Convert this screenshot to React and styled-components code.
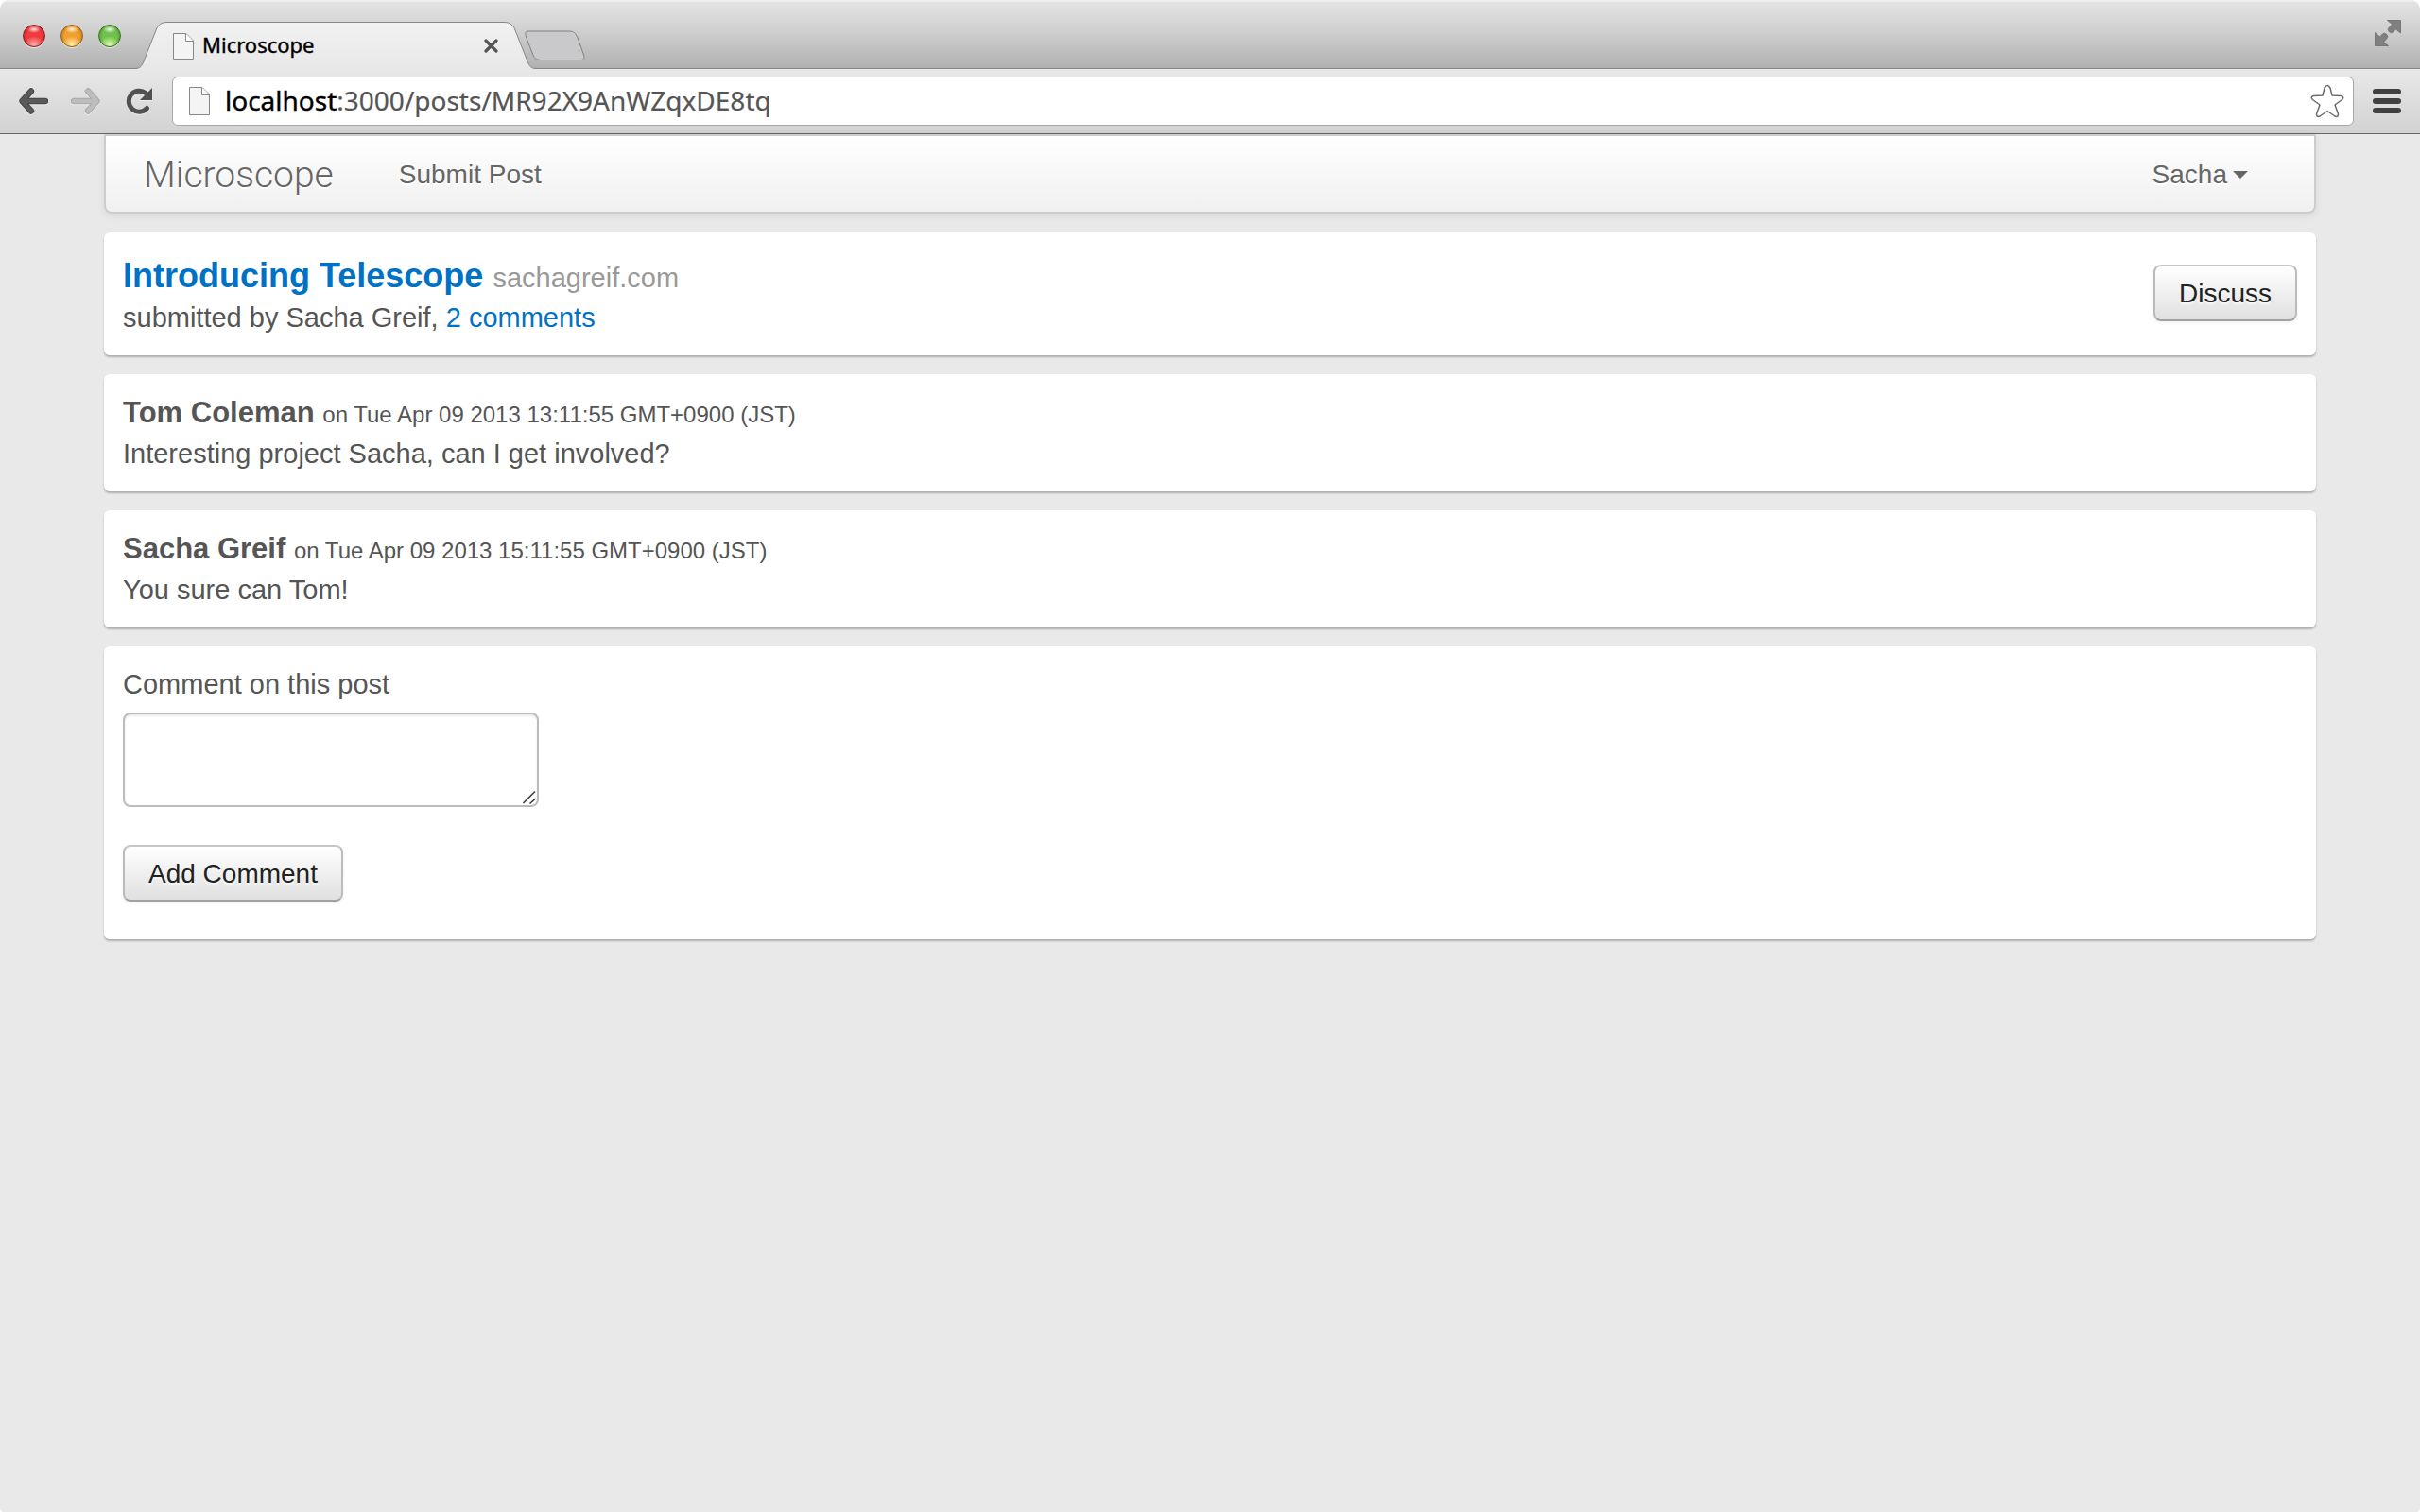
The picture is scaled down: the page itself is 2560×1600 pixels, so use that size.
import React from 'react';
import styled, { createGlobalStyle } from 'styled-components';

const sans = '"Liberation Sans", Arial, sans-serif';
const chromeFont = '"Noto Sans", "Open Sans", sans-serif';

const GlobalStyle = createGlobalStyle`
  * { box-sizing: border-box; }
  body { margin: 0; background: #fff; font-family: ${sans}; font-size: 28px; line-height: 40px; color: #555; }
  button, textarea, input { font: inherit; color: inherit; margin: 0; }
  a { color: #0072c6; text-decoration: none; }
  svg { display: block; flex: none; }
`;

const Window = styled.div`
  min-height: 100vh;
  display: flex;
  flex-direction: column;
  background: #e9e9e9;
  border-radius: 10px 10px 4px 4px;
  overflow: hidden;
`;

const TitleBar = styled.header`
  height: 73px;
  display: flex;
  align-items: flex-end;
  padding: 0 20px 0 24px;
  background: linear-gradient(#e4e4e4, #d2d2d2 40%, #b0b0b0);
  box-shadow: inset 0 2px 0 #efefef, inset 0 -1px 0 #868686;
`;

const Lights = styled.div`
  display: flex;
  gap: 16px;
  margin-bottom: 23px;
`;

const Light = styled.button`
  width: 24px;
  height: 24px;
  padding: 0;
  border: 1px solid ${(p) => p.$rim};
  border-radius: 50%;
  background:
    radial-gradient(ellipse 7px 4px at 50% 4px, rgba(255, 255, 255, 0.85), rgba(255, 255, 255, 0) 100%),
    radial-gradient(ellipse 11px 9px at 50% 92%, ${(p) => p.$glow}, transparent 100%),
    radial-gradient(circle at 50% 50%, ${(p) => p.$fill} 50%, ${(p) => p.$rim} 100%);
  box-shadow: 0 1px 1px rgba(255, 255, 255, 0.6);
`;

const Tab = styled.div`
  display: flex;
  height: 50px;
  margin-left: 15px;
`;

const TabBody = styled.div`
  width: 356px;
  display: flex;
  align-items: center;
  padding: 0 6px;
  background: linear-gradient(#f1f1f1, #e8e8e8);
  border-top: 1px solid #868686;
`;

const TabTitle = styled.span`
  flex: 1;
  margin-left: 9px;
  padding-bottom: 4px;
  font: 22px/28px ${chromeFont};
  color: #000;
  -webkit-text-stroke: 0.4px #000;
`;

const IconButton = styled.button`
  display: flex;
  align-items: center;
  justify-content: center;
  padding: 0;
  border: 0;
  background: none;
`;

const NewTab = styled(IconButton)`
  margin: 0 auto 8px -12px;
`;

const FullScreen = styled(IconButton)`
  margin-bottom: 24px;
`;

const Toolbar = styled.nav`
  height: 69px;
  display: flex;
  align-items: center;
  padding: 0 20px;
  background: linear-gradient(#e8e8e8, #d2d2d2);
  border-bottom: 1px solid #666;
`;

const NavButtons = styled.div`
  display: flex;
  gap: 24px;
  margin-right: 20px;
  svg { filter: drop-shadow(0 1px 0 rgba(255, 255, 255, 0.5)); }
`;

const Omnibox = styled.div`
  flex: 1;
  height: 52px;
  display: flex;
  align-items: center;
  padding: 0 9px 0 17px;
  background: #fff;
  border: 1px solid #a8a8a8;
  border-radius: 6px;
  margin-right: 20px;
`;

const Url = styled.div`
  flex: 1;
  margin-left: 16px;
  padding-bottom: 2px;
  font: 28px/40px ${chromeFont};
  color: #555;
  -webkit-text-stroke: 0.2px #555;
  strong { font-weight: 400; color: #000; -webkit-text-stroke: 0.4px #000; }
`;

const Page = styled.main`
  padding: 0 110px;
  display: flex;
  flex-direction: column;
  gap: 20px;
`;

const NavBar = styled.nav`
  height: 84px;
  display: flex;
  align-items: center;
  padding: 2px 70px 0 40px;
  background: linear-gradient(#fff, #f0f0f0);
  border: 2px solid #ccc;
  border-radius: 0 0 8px 8px;
  box-shadow: 0 2px 8px rgba(0, 0, 0, 0.08);
  text-shadow: 0 2px 0 #fff;
`;

const Brand = styled.a`
  font: 300 39px/40px Roboto, ${sans};
  color: #666;
`;

const NavLink = styled.a`
  margin-left: 69px;
  color: #666;
`;

const UserMenu = styled.button`
  display: flex;
  align-items: center;
  gap: 6px;
  margin-left: auto;
  padding: 0;
  border: 0;
  background: none;
  color: #666;
  text-shadow: inherit;
`;

const Caret = styled.span`
  border: 8px solid transparent;
  border-top-color: #666;
  border-bottom: 0;
`;

const Card = styled.section`
  padding: 20px 20px 18px;
  background: #fff;
  border-radius: 6px;
  box-shadow: 0 2px 2px rgba(0, 0, 0, 0.25);
`;

const PostCard = styled(Card)`
  display: flex;
  justify-content: space-between;
  padding-top: 26px;
`;

const PostTitle = styled.h1`
  margin: 0 0 2px;
  font-size: 36px;
  line-height: 40px;
  span { font-size: 29px; line-height: 1; font-weight: 400; color: #999; }
`;

const Text = styled.p`
  margin: 0;
  font-size: 29px;
  line-height: 44px;
`;

const CommentHead = styled.h2`
  margin: 0;
  font-size: 31px;
  line-height: 42px;
  span { font-size: 24px; line-height: 1; font-weight: 400; }
`;

const Button = styled.button`
  height: 60px;
  padding: 2px 25px 0;
  border: 2px solid #bbb;
  border-color: #c6c6c6 #bbb #a2a2a2;
  border-radius: 8px;
  background: linear-gradient(#fff, #e0e0e0);
  color: #222;
  text-shadow: 0 2px 2px rgba(255, 255, 255, 0.75);
  box-shadow: 0 2px 4px rgba(0, 0, 0, 0.05);
`;

const Discuss = styled(Button)`
  margin-top: 8px;
`;

const Form = styled.form`
  display: flex;
  flex-direction: column;
  align-items: flex-start;
  padding-bottom: 22px;
`;

const Label = styled.label`
  font-size: 29px;
`;

const Field = styled.textarea`
  display: block;
  width: 440px;
  height: 100px;
  margin: 10px 0 40px;
  padding: 8px 12px;
  border: 2px solid #bbb;
  border-radius: 8px;
  box-shadow: inset 0 2px 2px rgba(0, 0, 0, 0.08);
  resize: none;
`;

const FieldWrap = styled.div`
  position: relative;
  svg { position: absolute; right: 3px; bottom: 43px; }
`;

function PageIcon({ h }) {
  return (
    <svg width="22" height={h} viewBox={`0 0 22 ${h}`}>
      <path d={`M.5 .5H14L21.5 8V${h - 0.5}H.5Z`} fill="#f4f4f4" stroke="#888" />
      <path d="M13.5 .5V8.5H21.5" fill="#fff" stroke="#888" />
    </svg>
  );
}

function Arrow({ edge, fill, back }) {
  const d = back ? 'M13 3.500L3.500 14L13 24.500M4 14H28' : 'M18 3.500L27.500 14L18 24.500M27 14H3';
  return (
    <svg width="31" height="28" viewBox="0 0 31 28" fill="none" strokeLinecap="round" strokeLinejoin="round">
      <path d={d} stroke={edge} strokeWidth="6.400" />
      <path d={d} stroke={fill} strokeWidth="4.400" />
    </svg>
  );
}

const comments = [
  { who: 'Tom Coleman', when: 'on Tue Apr 09 2013 13:11:55 GMT+0900 (JST)', text: 'Interesting project Sacha, can I get involved?' },
  { who: 'Sacha Greif', when: 'on Tue Apr 09 2013 15:11:55 GMT+0900 (JST)', text: 'You sure can Tom!' },
];

export default function App() {
  return (
    <Window>
      <GlobalStyle />
      <TitleBar>
        <Lights>
          <Light aria-label="Close" $fill="#ee3a3e" $rim="#8f1d20" $glow="#ffb0a8" />
          <Light aria-label="Minimize" $fill="#f0a030" $rim="#95601a" $glow="#fff0a0" />
          <Light aria-label="Zoom" $fill="#6fc04c" $rim="#3a7424" $glow="#dcffb0" />
        </Lights>
        <Tab>
          <svg width="34" height="50" viewBox="0 0 34 50">
            <defs>
              <linearGradient id="tabFill" x1="0" y1="0" x2="0" y2="1">
                <stop offset="0" stopColor="#f1f1f1" />
                <stop offset="1" stopColor="#e8e8e8" />
              </linearGradient>
            </defs>
            <path d="M0 49.500C5 49.500 7 47 9 42L22 9C24 3 28 .5 34 .5V50H0Z" fill="url(#tabFill)" />
            <path d="M0 49.500C5 49.500 7 47 9 42L22 9C24 3 28 .5 34 .5" fill="none" stroke="#868686" />
          </svg>
          <TabBody>
            <PageIcon h={28} />
            <TabTitle>Microscope</TabTitle>
            <IconButton aria-label="Close tab">
              <svg width="15" height="15" viewBox="0 0 15 15">
                <path d="M2 2L13 13M13 2L2 13" stroke="#555" strokeWidth="3.200" strokeLinecap="round" />
              </svg>
            </IconButton>
          </TabBody>
          <svg width="34" height="50" viewBox="0 0 34 50">
            <path d="M34 49.500C29 49.500 27 47 25 42L12 9C10 3 6 .5 0 .5V50H34Z" fill="url(#tabFill)" />
            <path d="M34 49.500C29 49.500 27 47 25 42L12 9C10 3 6 .5 0 .5" fill="none" stroke="#868686" />
          </svg>
        </Tab>
        <NewTab aria-label="New tab">
          <svg width="64" height="33" viewBox="0 0 64 33">
            <path d="M4 1H47C52 1 54 3 56 8L62.500 26C64 30 62 31.500 59 31.500H17C12 31.500 10 29 8 24L1.500 7C0 3 1 1 4 1Z" fill="#c9c9cb" stroke="#808080" />
          </svg>
        </NewTab>
        <FullScreen aria-label="Full screen">
          <svg width="28" height="28" viewBox="0 0 28 28" fill="#808080" stroke="#6c6c6c" strokeWidth=".8">
            <path d="M13.500 .5H27.500V14L22.500 10L19.500 13C17 15.500 12.500 11 15 8.500L18.500 4.500Z" />
            <path d="M.5 13.500L5.500 18L8.500 15C11 12.500 15.500 17 13 19.500L9.500 23.500L14.500 27.500H.5Z" />
          </svg>
        </FullScreen>
      </TitleBar>

      <Toolbar>
        <NavButtons>
          <IconButton aria-label="Back"><Arrow back edge="#464646" fill="#5a5a5a" /></IconButton>
          <IconButton aria-label="Forward"><Arrow edge="#a9a9a9" fill="#bdbdbd" /></IconButton>
          <IconButton aria-label="Reload">
            <svg width="32" height="28" viewBox="-2 0 32 28">
              <path d="M23.500 21.500A11 11 0 1 1 22 5.500" fill="none" stroke="#505050" strokeWidth="5" strokeLinecap="round" />
              <path d="M29 0V13H16Z" fill="#505050" />
            </svg>
          </IconButton>
        </NavButtons>
        <Omnibox>
          <PageIcon h={30} />
          <Url><strong>localhost</strong>:3000/posts/MR92X9AnWZqxDE8tq</Url>
          <IconButton aria-label="Bookmark">
            <svg width="36" height="36" viewBox="0 0 36 36">
              <path d="M15 4Q18 -1 21 4L23 12L32.500 12.500Q36.500 14 33.500 16.500L26 22L29.500 31.500Q29.500 35.500 26 34L18 28.500L10 34Q6.500 35.500 6.500 31.500L10 22L2.500 16.500Q-.5 14 3.500 12.500L13 12Z" fill="#fff" stroke="#6c6c6c" strokeWidth="1.500" strokeLinejoin="round" />
            </svg>
          </IconButton>
        </Omnibox>
        <IconButton aria-label="Menu">
          <svg width="30" height="26" viewBox="0 0 30 26" fill="#404040">
            <rect width="30" height="6" rx="3" />
            <rect y="10" width="30" height="6" rx="3" />
            <rect y="20" width="30" height="6" rx="3" />
          </svg>
        </IconButton>
      </Toolbar>

      <Page>
        <NavBar>
          <Brand href="#">Microscope</Brand>
          <NavLink href="#submit">Submit Post</NavLink>
          <UserMenu>Sacha<Caret /></UserMenu>
        </NavBar>

        <PostCard>
          <div>
            <PostTitle><a href="#post">Introducing Telescope</a> <span>sachagreif.com</span></PostTitle>
            <Text>submitted by Sacha Greif, <a href="#comments">2 comments</a></Text>
          </div>
          <Discuss>Discuss</Discuss>
        </PostCard>

        {comments.map((c) => (
          <Card key={c.who}>
            <CommentHead>{c.who} <span>{c.when}</span></CommentHead>
            <Text>{c.text}</Text>
          </Card>
        ))}

        <Card>
          <Form onSubmit={(e) => e.preventDefault()}>
            <Label htmlFor="body">Comment on this post</Label>
            <FieldWrap>
              <Field id="body" />
              <svg width="14" height="14" viewBox="0 0 14 14">
                <path d="M.5 13L13 .5M7.500 13.500L13.500 8" stroke="#444" strokeWidth="1.600" />
              </svg>
            </FieldWrap>
            <Button type="submit">Add Comment</Button>
          </Form>
        </Card>
      </Page>
    </Window>
  );
}
